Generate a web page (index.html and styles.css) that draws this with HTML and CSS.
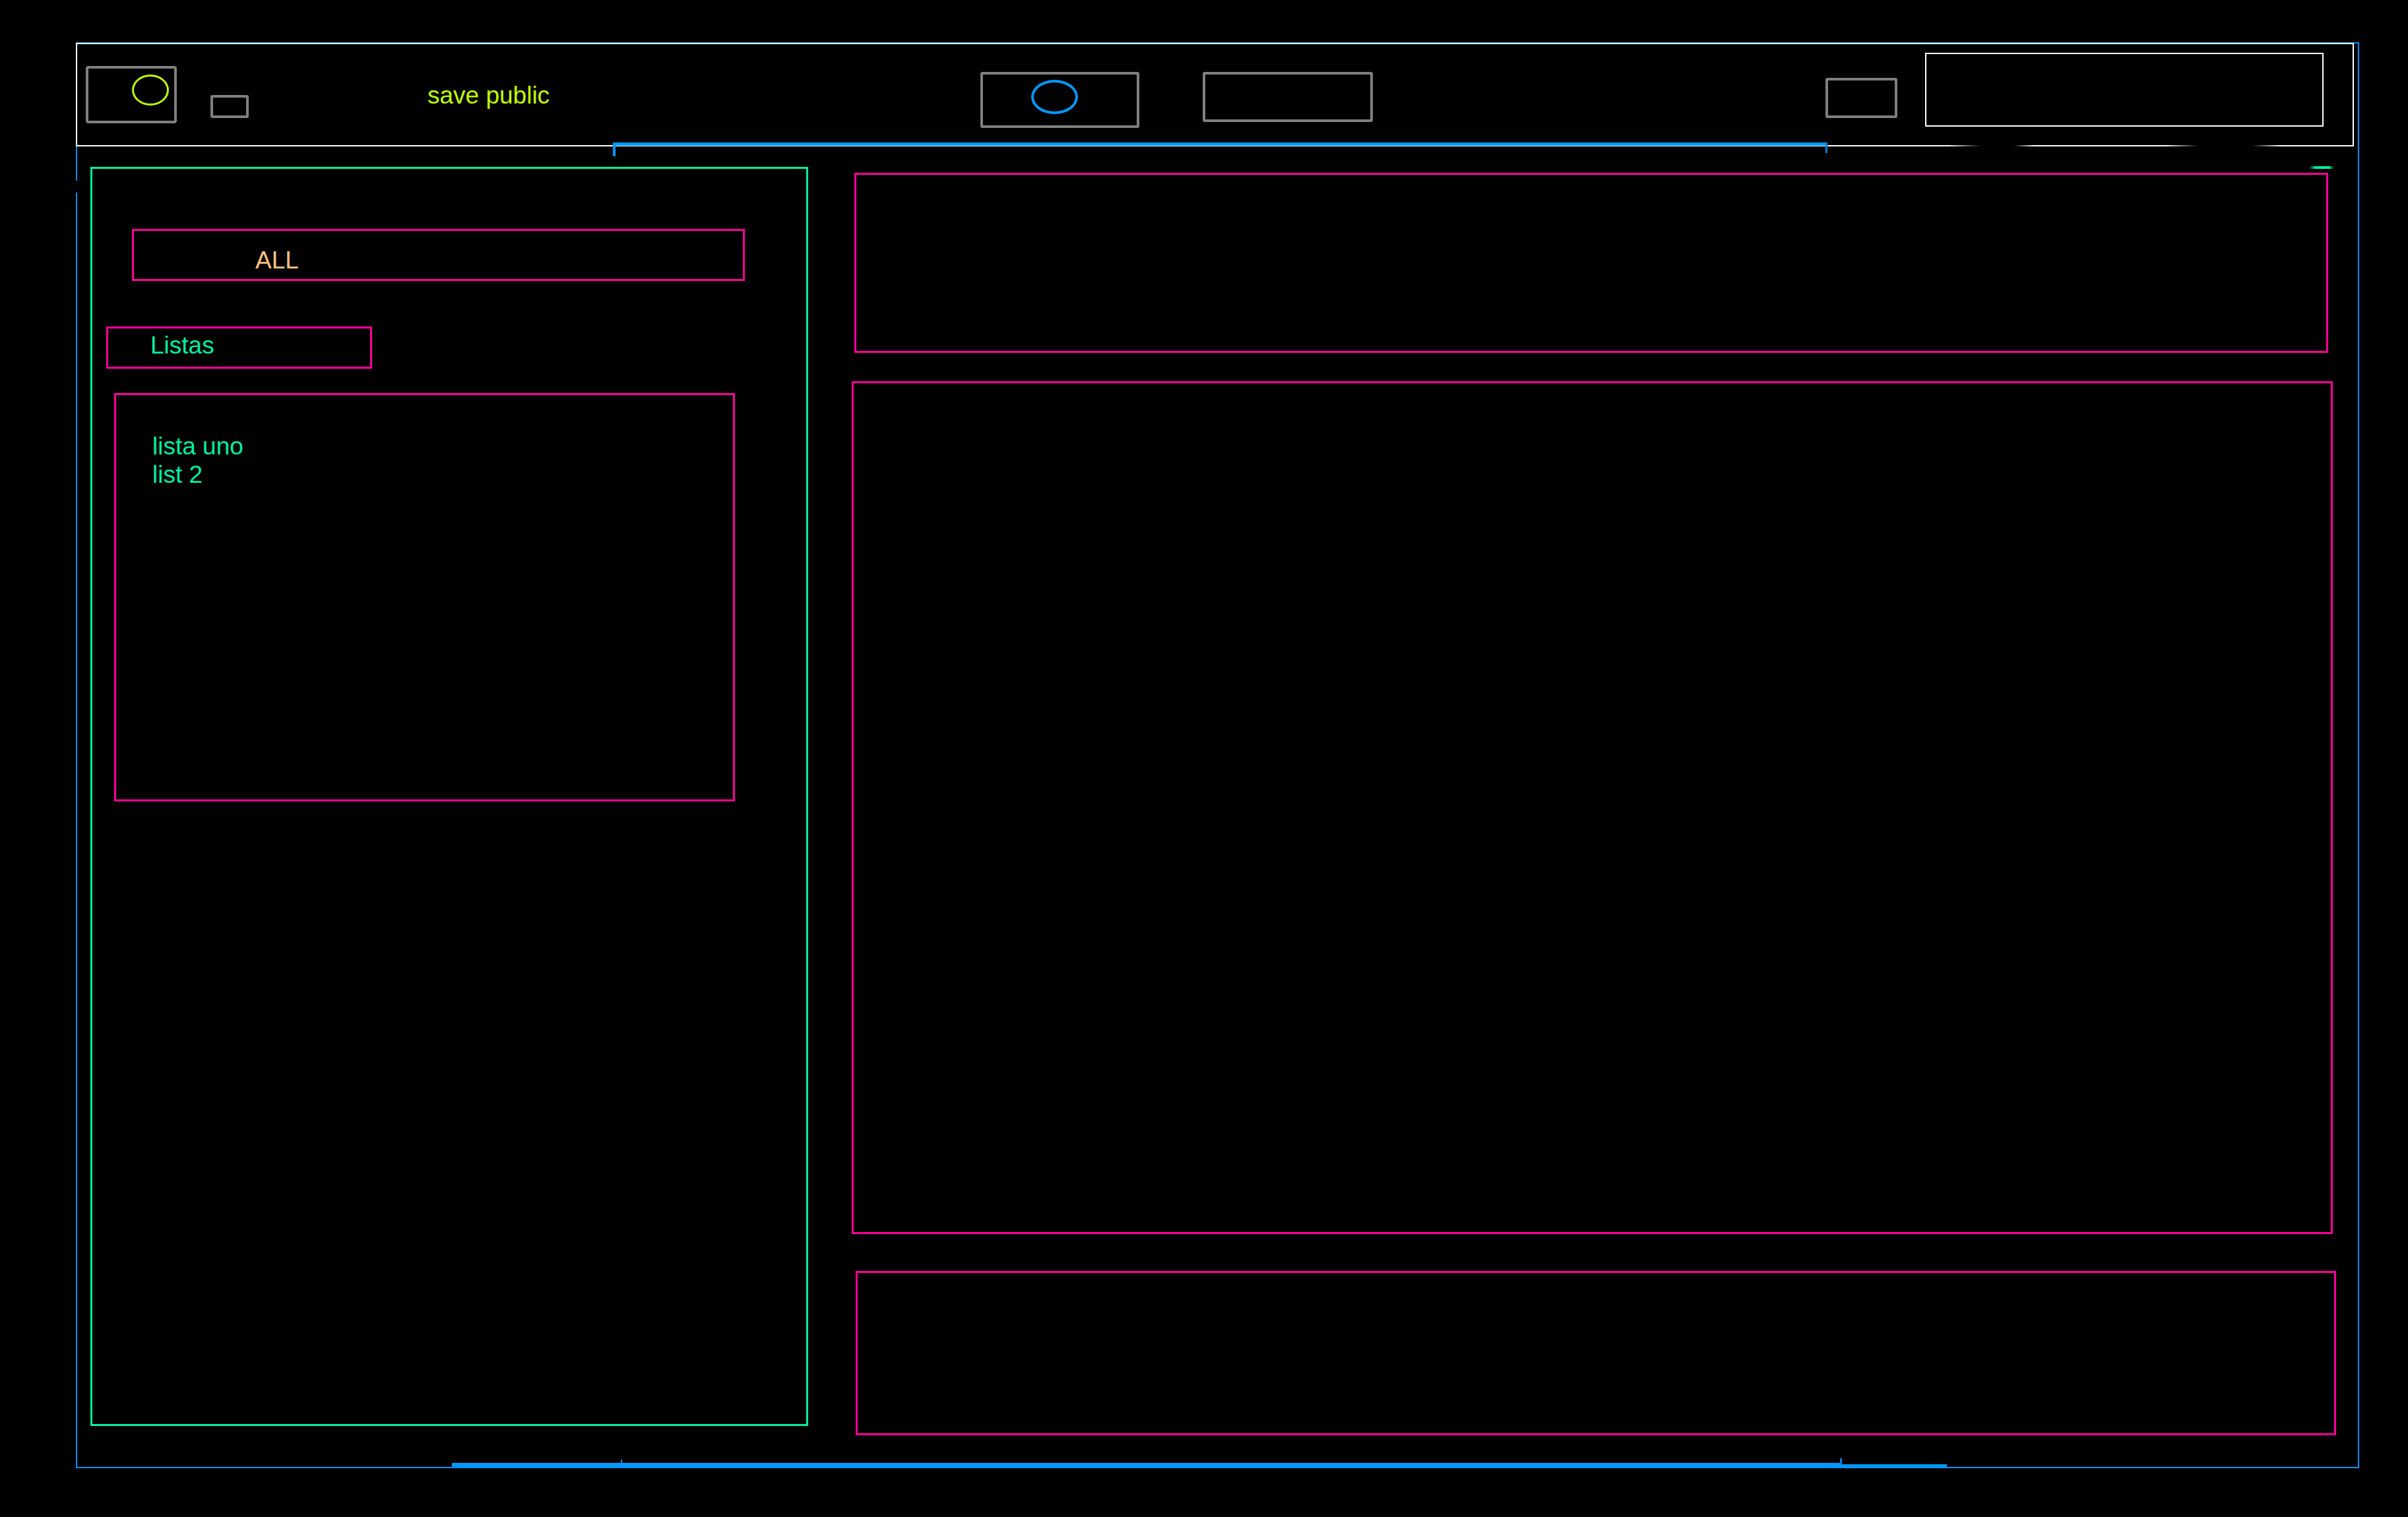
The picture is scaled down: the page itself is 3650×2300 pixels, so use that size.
FILE: index.html
```html
<!DOCTYPE html>
<html lang="es">
<head>
<meta charset="utf-8">
<title>save public</title>
<link rel="stylesheet" href="styles.css">
</head>
<body>
<div class="frame">
  <header class="topbar">
    <div class="logo"><div class="logo-dot"></div></div>
    <div class="mini"></div>
    <div class="title">save public</div>
    <div class="search"><div class="search-dot"></div></div>
    <div class="btn"></div>
    <div class="sq"></div>
    <div class="field"></div>
    <div class="bracket-top"></div>
    <div class="line-fade"></div>
  </header>
  <div class="main-row">
    <aside class="side">
      <div class="all">ALL</div>
      <div class="listas">Listas</div>
      <div class="lists">
        <div class="list-item">lista uno</div>
        <div class="list-item">list 2</div>
      </div>
    </aside>
    <main class="content">
      <section class="box box-top"></section>
      <section class="box box-mid"></section>
      <section class="box box-bot"></section>
    </main>
  </div>
  <div class="bar-a"></div>
  <div class="bar-b"></div>
  <div class="tick-a"></div>
  <div class="tick-b"></div>
  <div class="dash"></div>
  <div class="notch"></div>
</div>
</body>
</html>
```
FILE: styles.css
```css
html, body {
  margin: 0;
  padding: 0;
  background: #000;
}
body {
  font-family: "Liberation Sans", Arial, sans-serif;
  width: 3650px;
  height: 2300px;
  overflow: hidden;
}
* { box-sizing: border-box; }

.frame {
  position: relative;
  margin: 64px 0 0 115px;
  width: 3461px;
  height: 2162px;
  border: 2px solid #0a8ff0;
}

/* header */
.topbar {
  position: relative;
  display: flex;
  align-items: flex-start;
  margin: -1px 0 0 -2px;
  width: 3453px;
  height: 157px;
  border: 2px solid #fff;
  border-top-color: #e8f4ff;
}
.logo {
  margin: 33px 0 0 13px;
  width: 138px;
  height: 87px;
  border: 4px solid #7f7f7f;
  border-radius: 4px;
  padding: 9px 0 0 66px;
}
.logo-dot {
  width: 56px;
  height: 47px;
  border: 3px solid #c0ff00;
  border-radius: 50%;
}
.mini {
  margin: 77px 0 0 51px;
  width: 58px;
  height: 35px;
  border: 4px solid #7f7f7f;
  border-radius: 3px;
}
.title {
  margin: 56px 0 0 271px;
  width: 200px;
  font-size: 37px;
  line-height: 43px;
  color: #c0ff00;
  white-space: nowrap;
}
.search {
  margin: 42px 0 0 638px;
  width: 241px;
  height: 85px;
  border: 4px solid #7f7f7f;
  border-radius: 3px;
  padding: 8px 0 0 73px;
}
.search-dot {
  width: 71px;
  height: 52px;
  border: 4px solid #0098ff;
  border-radius: 50%;
}
.btn {
  margin: 42px 0 0 96px;
  width: 258px;
  height: 76px;
  border: 4px solid #7f7f7f;
  border-radius: 3px;
}
.sq {
  margin: 51px 0 0 686px;
  width: 109px;
  height: 61px;
  border: 4px solid #7f7f7f;
  border-radius: 3px;
}
.field {
  margin: 13px 0 0 42px;
  width: 604px;
  height: 112px;
  border: 2px solid #fff;
}
.bracket-top {
  position: absolute;
  left: 812px;
  top: 149px;
  width: 1841px;
  height: 5px;
  background: #0098ff;
}
.bracket-top::before {
  content: "";
  position: absolute;
  left: 0;
  top: 0;
  width: 4px;
  height: 21px;
  background: #0098ff;
}
.bracket-top::after {
  content: "";
  position: absolute;
  right: 0;
  top: 0;
  width: 3px;
  height: 16px;
  background: #0a7fd8;
}
.line-fade {
  position: absolute;
  left: 2836px;
  bottom: -2px;
  width: 504px;
  height: 2px;
  background: linear-gradient(to right,
    rgba(0,0,0,0) 0,
    #000 50px,
    #000 100px,
    rgba(0,0,0,0) 130px,
    rgba(0,0,0,0) 330px,
    #000 380px,
    #000 460px,
    rgba(0,0,0,0) 504px);
}

/* body */
.main-row {
  display: flex;
  align-items: flex-start;
}
.side {
  margin: 31px 0 0 20px;
  width: 1088px;
  height: 1909px;
  border: 3px solid #00f0a0;
  flex-shrink: 0;
}
.all,
.listas,
.lists {
  font-size: 37px;
  line-height: 43px;
  border: 3px solid #ff0099;
}
.all {
  margin: 91px 0 0 60px;
  width: 929px;
  height: 79px;
  padding: 23px 0 0 184px;
  color: #ffc183;
}
.listas {
  margin: 69px 0 0 21px;
  width: 403px;
  height: 64px;
  padding: 4px 0 0 64px;
  color: #00f0a0;
}
.lists {
  margin: 37px 0 0 33px;
  width: 941px;
  height: 619px;
  padding: 56px 0 0 55px;
  color: #00f0a0;
}

.content {
  display: flex;
  flex-direction: column;
  align-items: flex-start;
  margin: 40px 0 0 66px;
}
.box {
  border: 3px solid #ff0099;
  flex-shrink: 0;
}
.box-top {
  margin-left: 4px;
  width: 2234px;
  height: 273px;
}
.box-mid {
  margin-top: 43px;
  width: 2245px;
  height: 1293px;
}
.box-bot {
  margin: 56px 0 0 6px;
  width: 2244px;
  height: 249px;
}

/* decorative strokes over the frame */
.bar-a {
  position: absolute;
  left: 568px;
  top: 2152px;
  width: 2105px;
  height: 6px;
  background: #0098ff;
}
.bar-b {
  position: absolute;
  left: 2673px;
  top: 2154px;
  width: 161px;
  height: 6px;
  background: #0098ff;
}
.tick-a {
  position: absolute;
  left: 824px;
  top: 2147px;
  width: 2px;
  height: 6px;
  background: #0098ff;
}
.tick-b {
  position: absolute;
  left: 2672px;
  top: 2145px;
  width: 3px;
  height: 9px;
  background: #0a7fd8;
}
.dash {
  position: absolute;
  left: 3383px;
  top: 186px;
  width: 38px;
  height: 4px;
  background: linear-gradient(to right, rgba(0,240,160,0), #00f0a0 25%, #00f0a0 80%, rgba(0,240,160,0));
}
.notch {
  position: absolute;
  left: -3px;
  top: 208px;
  width: 4px;
  height: 18px;
  background: #000;
}
```
